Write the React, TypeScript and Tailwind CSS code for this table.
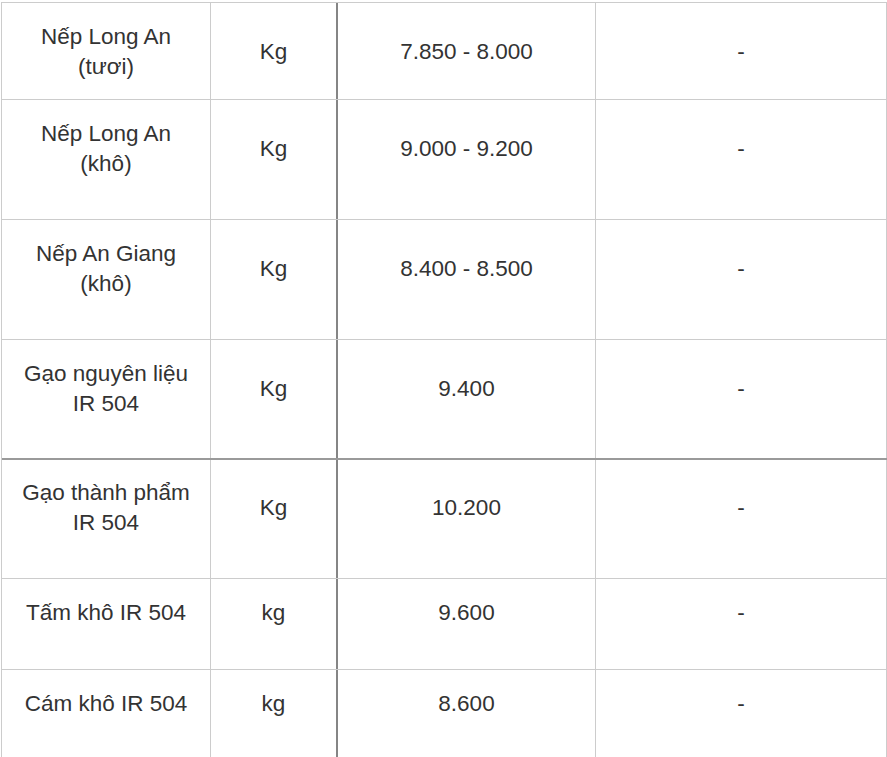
type Row = {
  name: string[];
  unit: string;
  price: string;
  h: string;
  pt: string;
  line: string;
};

const rows: Row[] = [
  { name: ["Nếp Long An", "(tươi)"], unit: "Kg", price: "7.850 - 8.000", h: "h-[97px]", pt: "pt-[19px]", line: "border-b border-[#cccccc]" },
  { name: ["Nếp Long An", "(khô)"], unit: "Kg", price: "9.000 - 9.200", h: "h-[120px]", pt: "pt-[19px]", line: "border-b border-[#cccccc]" },
  { name: ["Nếp An Giang", "(khô)"], unit: "Kg", price: "8.400 - 8.500", h: "h-[120px]", pt: "pt-[19px]", line: "border-b border-[#cccccc]" },
  { name: ["Gạo nguyên liệu", "IR 504"], unit: "Kg", price: "9.400", h: "h-[120px]", pt: "pt-[19px]", line: "border-b-2 border-[#9a9a9a]" },
  { name: ["Gạo thành phẩm", "IR 504"], unit: "Kg", price: "10.200", h: "h-[119px]", pt: "pt-[18px]", line: "border-b border-[#cccccc]" },
  { name: ["Tấm khô IR 504"], unit: "kg", price: "9.600", h: "h-[91px]", pt: "pt-[19px]", line: "border-b border-[#cccccc]" },
  { name: ["Cám khô IR 504"], unit: "kg", price: "8.600", h: "h-[110px]", pt: "pt-[19px]", line: "border-b border-[#cccccc]" },
];

function Cell({ lines, two, className }: { lines: string[]; two: boolean; className: string }) {
  return (
    <div className={`shrink-0 ${className}`}>
      <div className={`flex flex-col items-center justify-center ${two ? "h-[60px]" : "h-[30px]"}`}>
        {lines.map((l) => (
          <span key={l} className="block leading-[30px] whitespace-nowrap">
            {l}
          </span>
        ))}
      </div>
    </div>
  );
}

export default function App() {
  return (
    <div className="bg-white w-[887px] h-[757px] overflow-hidden pt-[2px] pl-[1px]">
      <div
        className="w-[886px] border-l border-t border-[#cccccc] text-[22.5px] text-[#333333] text-center"
        style={{ fontFamily: '"Liberation Sans", Arial, sans-serif' }}
      >
        {rows.map((r) => {
          const two = r.name.length > 1;
          return (
            <div key={r.name.join(" ")} className={`flex ${r.h} ${r.line}`}>
              <Cell lines={r.name} two={two} className={`w-[209px] border-r border-[#cccccc] ${r.pt}`} />
              <Cell lines={[r.unit]} two={two} className={`w-[125px] ${r.pt}`} />
              <Cell
                lines={[r.price]}
                two={two}
                className={`w-[260px] border-l-2 border-l-[#858585] border-r border-r-[#cccccc] ${r.pt}`}
              />
              <Cell lines={["-"]} two={two} className={`w-[291px] border-r border-[#cccccc] ${r.pt}`} />
            </div>
          );
        })}
      </div>
    </div>
  );
}
